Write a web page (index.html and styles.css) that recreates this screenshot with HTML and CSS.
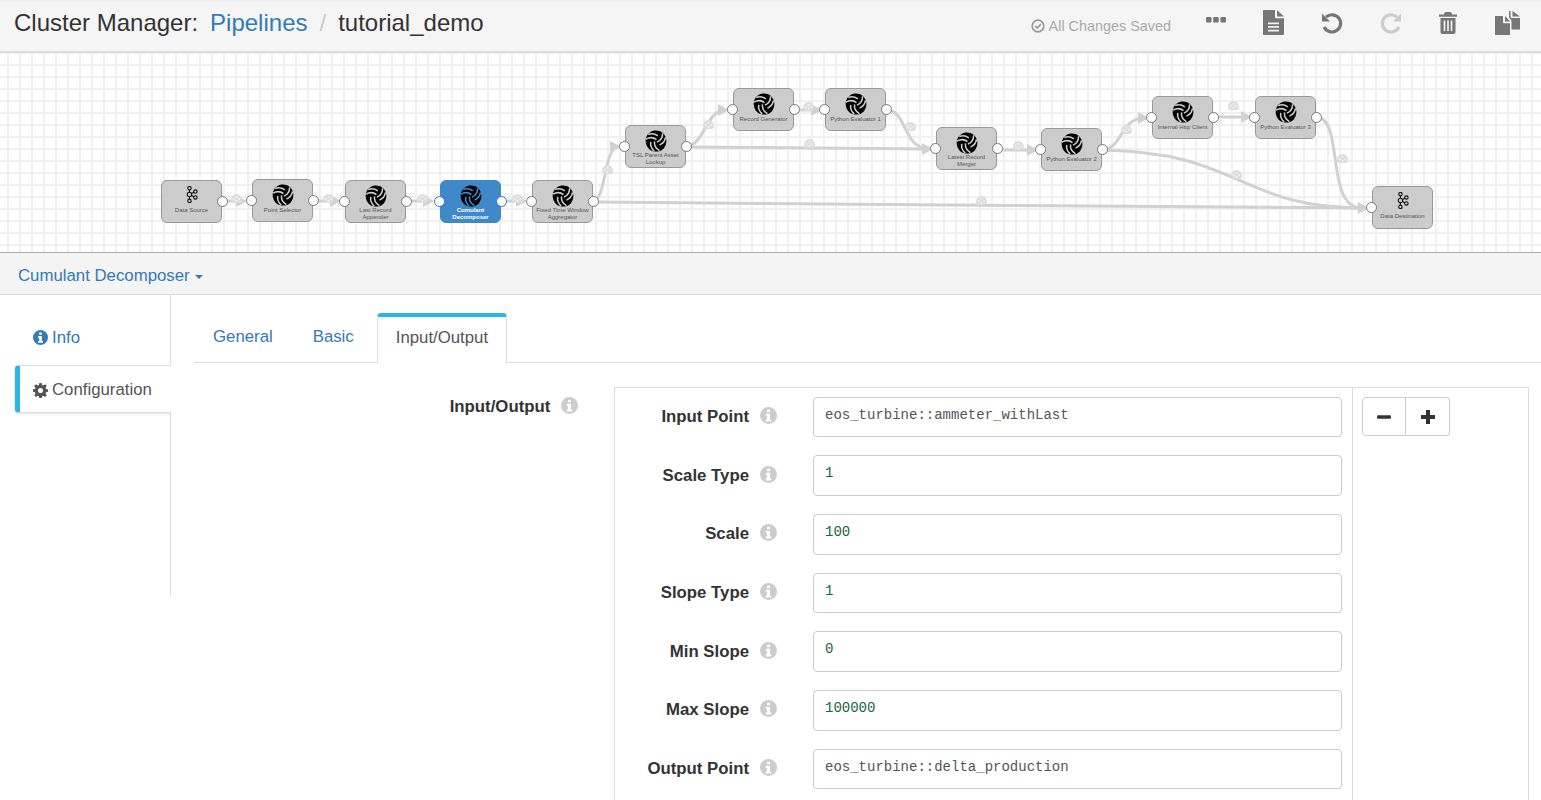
FILE: index.html
```html
<!DOCTYPE html>
<html lang="en">
<head>
    <meta charset="UTF-8">
    <title>tutorial_demo</title>
    <link rel="stylesheet" href="styles.css">
</head>
<body>

<svg class="defs" width="0" height="0">
    <symbol id="swirl" viewBox="0 0 24 24">
        <path fill="#000" d="M12 .6C17 .6 21.200 3.600 22.800 8.500 24.300 13.500 22.500 18.800 18.500 21.800 14.500 24.200 8.500 24 5 21.200 1.300 18 -.2 13 1.300 8.300 3 3.500 7 .6 12 .6z"/>
        <g id="swirl-arm" fill="none" stroke="currentColor" stroke-width="1.700">
            <path d="M12.500 10.500C9.500 8 5.500 7.500 1 10"/>
            <path d="M14 6.500C10.500 3.800 7 3.500 3.500 5"/>
        </g>
        <use href="#swirl-arm" transform="rotate(120 12 12)"/>
        <use href="#swirl-arm" transform="rotate(240 12 12)"/>
    </symbol>
    <symbol id="hub" viewBox="0 0 14 20">
        <g fill="none" stroke="#111" stroke-width="1.300">
            <circle cx="4" cy="2.500" r="2"/>
            <circle cx="4" cy="10" r="2.600"/>
            <circle cx="4" cy="17.500" r="2"/>
            <circle cx="11" cy="6.500" r="2"/>
            <circle cx="11" cy="13.500" r="2"/>
            <path d="M4 4.500v3M4 12.600v3M6.300 8.800l2.900-1.500M6.300 11.200l2.900 1.500"/>
        </g>
    </symbol>
    <symbol id="gauge" viewBox="0 0 12 10">
        <path fill="#ddd" d="M6 0a6 6 0 0 0-6 6c0 1.500.5 3 1.500 4h9c1-1 1.500-2.500 1.500-4a6 6 0 0 0-6-6z"/>
        <g fill="#f4f4f4">
            <circle cx="3" cy="5.500" r="1"/>
            <circle cx="6" cy="3" r="1"/>
            <circle cx="9" cy="5.500" r="1"/>
            <circle cx="6" cy="7.500" r="1.200"/>
        </g>
    </symbol>
    <symbol id="info" viewBox="0 0 16 16">
        <path fill-rule="evenodd" d="M8 0a8 8 0 1 0 0 16A8 8 0 0 0 8 0zM6.600 2.600h2.800v2.400H6.600zM5.400 6.400h4v5.400h1.200v1.800H5.400v-1.800h1.200V8.200H5.400z"/>
    </symbol>
</svg>

<div class="topbar">
    <h1 class="crumbs">
        <span>Cluster Manager:</span>
        <a class="crumb-link">Pipelines</a>
        <span class="crumb-sep">/</span>
        <span>tutorial_demo</span>
    </h1>
    <div class="tools">
        <span class="saved">
            <svg class="saved-icon" viewBox="0 0 14 14"><circle cx="7" cy="7" r="5.800" fill="none" stroke="#999" stroke-width="1.700"/><path d="M4.200 7l2 2 3.600-3.800" fill="none" stroke="#999" stroke-width="1.700"/></svg>
            All Changes Saved
        </span>
        <svg class="tool tool-more" viewBox="0 0 20 6"><rect x="0" y="0" width="5.500" height="5.500" rx="1.200"/><rect x="7.200" y="0" width="5.500" height="5.500" rx="1.200"/><rect x="14.500" y="0" width="5.500" height="5.500" rx="1.200"/></svg>
        <svg class="tool tool-file" viewBox="0 0 21 25"><path fill-rule="evenodd" d="M1 0h11v7c0 .8.500 1.300 1.300 1.300H21V24c0 .6-.4 1-1 1H1c-.6 0-1-.4-1-1V1c0-.6.400-1 1-1zm4 12.500v1.700h11v-1.700zm0 3.600v1.700h11v-1.700zm0 3.600v1.700h11v-1.700z"/><path d="M14 0l7 6.500h-7z"/></svg>
        <svg class="tool tool-undo" viewBox="0 0 22 22"><path fill="none" stroke="currentColor" stroke-width="3.200" d="M5 5.200A8.600 8.600 0 1 1 3.200 15"/><path fill="currentColor" d="M1 1.500v8h8z"/></svg>
        <svg class="tool tool-redo" viewBox="0 0 22 22"><path fill="none" stroke="currentColor" stroke-width="3.200" d="M17 5.200A8.600 8.600 0 1 0 18.800 15"/><path fill="currentColor" d="M21 1.500v8h-8z"/></svg>
        <svg class="tool tool-trash" viewBox="0 0 18 22"><path fill-rule="evenodd" d="M6 0h6l1.200 2.500H18v2.300H0V2.500h4.800zM1.500 6h15v14c0 1.200-.8 2-2 2h-11c-1.200 0-2-.8-2-2zm3.200 2.500v10.500h1.600V8.500zm3.500 0v10.500h1.600V8.500zm3.500 0v10.500h1.600V8.500z"/></svg>
        <svg class="tool tool-copy" viewBox="0 0 25 24"><path fill-rule="evenodd" d="M0 5h8v6c0 .8.500 1.300 1.300 1.300H15V24H0z"/><path d="M10 5l5 5.500h-5z"/><path d="M14 0h1.500v5.800c0 .7.500 1.200 1.200 1.200H25v11.500h-8.500v-9L14 6.500z"/><path d="M17.500 0L25 5.500h-7.500z"/></svg>
    </div>
</div>

<div class="canvas">
    <svg class="edges" viewBox="0 0 1541 199">
        <g fill="none" stroke="#d1d1d1" stroke-width="3">
            <path d="M222 148H240"/>
            <path d="M313 148H333"/>
            <path d="M406 148H428"/>
            <path d="M501 148H520"/>
            <path d="M593 148C606 148 604 94 618 94"/>
            <path d="M593 149C800 150 1200 155 1362 155"/>
            <path d="M686 93C705 93 705 57 726 57"/>
            <path d="M686 94C760 94 860 96 925 96"/>
            <path d="M794 57H816"/>
            <path d="M886 57C908 57 902 96 930 96"/>
            <path d="M997 97C1010 97 1020 97 1033 97"/>
            <path d="M1102 97C1122 97 1120 65 1144 65"/>
            <path d="M1102 97C1240 99 1240 155 1362 155"/>
            <path d="M1213 64H1246"/>
            <path d="M1316 64C1345 64 1324 155 1362 155"/>
        </g>
        <g fill="#d1d1d1">
            <path d="M236 142l11 6-11 6z"/>
            <path d="M330 142l11 6-11 6z"/>
            <path d="M423 142l11 6-11 6z"/>
            <path d="M516 142l11 6-11 6z"/>
            <path d="M610 88l11 5.500-11 5.500z"/>
            <path d="M718 51l11 6-11 6z"/>
            <path d="M811 51l11 6-11 6z"/>
            <path d="M922 90l11 6-11 6z"/>
            <path d="M1027 91l11 6-11 6z"/>
            <path d="M1138 59l11 6-11 6z"/>
            <path d="M1241 58l11 6-11 6z"/>
            <path d="M1358 149l11 6-11 6z"/>
        </g>
        <use href="#gauge" x="231" y="141" width="11" height="9"/>
        <use href="#gauge" x="323" y="141" width="11" height="9"/>
        <use href="#gauge" x="417" y="141" width="11" height="9"/>
        <use href="#gauge" x="512" y="141" width="11" height="9"/>
        <use href="#gauge" x="602" y="112" width="11" height="9"/>
        <use href="#gauge" x="703" y="67" width="11" height="9"/>
        <use href="#gauge" x="804" y="86" width="11" height="9"/>
        <use href="#gauge" x="803" y="49" width="11" height="9"/>
        <use href="#gauge" x="905" y="69" width="11" height="9"/>
        <use href="#gauge" x="976" y="143" width="11" height="9"/>
        <use href="#gauge" x="1013" y="88" width="11" height="9"/>
        <use href="#gauge" x="1121" y="72" width="11" height="9"/>
        <use href="#gauge" x="1228" y="48" width="11" height="9"/>
        <use href="#gauge" x="1231" y="117" width="11" height="9"/>
        <use href="#gauge" x="1337" y="101" width="11" height="9"/>
    </svg>

    <div class="node" style="left:161px;top:127px"><svg class="node-hub"><use href="#hub"/></svg><span class="node-name">Data Source</span><i class="port port-out"></i></div>
    <div class="node" style="left:252px;top:126px"><svg class="node-logo"><use href="#swirl"/></svg><span class="node-name">Point Selector</span><i class="port port-in"></i><i class="port port-out"></i></div>
    <div class="node" style="left:345px;top:127px"><svg class="node-logo"><use href="#swirl"/></svg><span class="node-name">Last Record Appender</span><i class="port port-in"></i><i class="port port-out"></i></div>
    <div class="node node-active" style="left:440px;top:127px"><svg class="node-logo"><use href="#swirl"/></svg><span class="node-name">Cumulant Decomposer</span><i class="port port-in"></i><i class="port port-out"></i></div>
    <div class="node" style="left:532px;top:127px"><svg class="node-logo"><use href="#swirl"/></svg><span class="node-name">Fixed Time Window Aggregator</span><i class="port port-in"></i><i class="port port-out"></i></div>
    <div class="node" style="left:625px;top:72px"><svg class="node-logo"><use href="#swirl"/></svg><span class="node-name">TSL Parent Asset Lookup</span><i class="port port-in"></i><i class="port port-out"></i></div>
    <div class="node" style="left:733px;top:35px"><svg class="node-logo"><use href="#swirl"/></svg><span class="node-name">Record Generator</span><i class="port port-in"></i><i class="port port-out"></i></div>
    <div class="node" style="left:825px;top:35px"><svg class="node-logo"><use href="#swirl"/></svg><span class="node-name">Python Evaluator 1</span><i class="port port-in"></i><i class="port port-out"></i></div>
    <div class="node" style="left:936px;top:74px"><svg class="node-logo"><use href="#swirl"/></svg><span class="node-name">Latest Record Merger</span><i class="port port-in"></i><i class="port port-out"></i></div>
    <div class="node" style="left:1041px;top:75px"><svg class="node-logo"><use href="#swirl"/></svg><span class="node-name">Python Evaluator 2</span><i class="port port-in"></i><i class="port port-out"></i></div>
    <div class="node" style="left:1152px;top:43px"><svg class="node-logo"><use href="#swirl"/></svg><span class="node-name">Internal Http Client</span><i class="port port-in"></i><i class="port port-out"></i></div>
    <div class="node" style="left:1255px;top:43px"><svg class="node-logo"><use href="#swirl"/></svg><span class="node-name">Python Evaluator 3</span><i class="port port-in"></i><i class="port port-out"></i></div>
    <div class="node" style="left:1372px;top:133px"><svg class="node-hub"><use href="#hub"/></svg><span class="node-name">Data Destination</span><i class="port port-in"></i></div>
</div>

<div class="stage-bar">
    <a class="stage-name">Cumulant Decomposer <i class="caret"></i></a>
</div>

<div class="detail">
    <div class="side">
        <a class="side-item">
            <svg class="side-icon"><use href="#info"/></svg>
            Info
        </a>
        <a class="side-item side-active">
            <svg class="side-icon" viewBox="0 0 16 16"><path fill-rule="evenodd" d="M6.700 0h2.600l.4 2.200 1.300.5L12.900 1.400l1.800 1.800-1.300 1.900.5 1.300 2.100.4v2.600l-2.100.4-.5 1.300 1.300 1.900-1.800 1.800-1.900-1.300-1.300.5-.4 2.100H6.700l-.4-2.100-1.300-.5-1.900 1.300-1.800-1.800 1.300-1.900-.5-1.300L0 9.300V6.700l2.100-.4.5-1.300L1.300 3.100l1.800-1.800L5 2.700l1.300-.5zM8 5.300a2.700 2.700 0 1 0 0 5.400 2.700 2.700 0 0 0 0-5.400z"/></svg>
            Configuration
        </a>
    </div>

    <div class="main">
        <div class="tabs">
            <a class="tab">General</a>
            <a class="tab">Basic</a>
            <a class="tab tab-active">Input/Output</a>
        </div>

        <div class="config">
            <div class="config-label">
                Input/Output
                <svg class="help"><use href="#info"/></svg>
            </div>
            <div class="config-box">
                <div class="fields">
                    <div class="field">
                        <label class="field-label">Input Point <svg class="help"><use href="#info"/></svg></label>
                        <div class="field-input">eos_turbine::ammeter_withLast</div>
                    </div>
                    <div class="field">
                        <label class="field-label">Scale Type <svg class="help"><use href="#info"/></svg></label>
                        <div class="field-input num">1</div>
                    </div>
                    <div class="field">
                        <label class="field-label">Scale <svg class="help"><use href="#info"/></svg></label>
                        <div class="field-input num">100</div>
                    </div>
                    <div class="field">
                        <label class="field-label">Slope Type <svg class="help"><use href="#info"/></svg></label>
                        <div class="field-input num">1</div>
                    </div>
                    <div class="field">
                        <label class="field-label">Min Slope <svg class="help"><use href="#info"/></svg></label>
                        <div class="field-input num">0</div>
                    </div>
                    <div class="field">
                        <label class="field-label">Max Slope <svg class="help"><use href="#info"/></svg></label>
                        <div class="field-input num">100000</div>
                    </div>
                    <div class="field">
                        <label class="field-label">Output Point <svg class="help"><use href="#info"/></svg></label>
                        <div class="field-input">eos_turbine::delta_production</div>
                    </div>
                </div>
                <div class="actions">
                    <div class="btns">
                        <button class="btn"><svg viewBox="0 0 14 14"><rect x="0" y="5.200" width="14" height="3.600" rx="1"/></svg></button>
                        <button class="btn"><svg viewBox="0 0 14 14"><path d="M5 0h4v5h5v4H9v5H5V9H0V5h5z"/></svg></button>
                    </div>
                </div>
            </div>
        </div>
    </div>
</div>

</body>
</html>
```

FILE: styles.css
```css
*{
    margin: 0;
    padding: 0;
    box-sizing: border-box;
}
html, body{
    height: 800px;
    overflow: hidden;
}
body{
    font-family: "Liberation Sans", Arial, sans-serif;
    font-size: 14px;
    color: #333;
    background: #fff;
}
.defs{
    position: absolute;
}

/* top bar */
.topbar{
    height: 53px;
    background: #f5f5f5;
    border-top: 2px solid #eee;
    border-bottom: 2px solid #ddd;
    display: flex;
    justify-content: space-between;
    align-items: center;
    padding: 0 0 8px 14px;
}
.crumbs{
    font-size: 24px;
    font-weight: normal;
    display: flex;
    color: #333;
}
.crumb-link{
    color: #337ab7;
    margin-left: 12px;
}
.crumb-sep{
    color: #ccc;
    margin: 0 12px;
}
.tools{
    display: flex;
    align-items: center;
    padding-right: 21px;
}
.tool{
    display: block;
    fill: #777;
    color: #777;
}
.saved{
    color: #aaa;
    font-size: 14.400px;
    display: flex;
    align-items: center;
    gap: 4px;
    margin-top: 7px;
}
.saved-icon{
    width: 14px;
    height: 14px;
}
.tool-more{
    width: 20px;
    height: 6px;
    margin: 0 0 6px 35px;
}
.tool-file{
    width: 21px;
    height: 25px;
    margin-left: 37px;
}
.tool-undo{
    width: 22px;
    height: 22px;
    margin-left: 37px;
}
.tool-redo{
    width: 22px;
    height: 22px;
    margin-left: 37px;
    color: #ccc;
}
.tool-trash{
    width: 18px;
    height: 22px;
    margin-left: 37px;
}
.tool-copy{
    width: 25px;
    height: 24px;
    margin-left: 38px;
}

/* pipeline canvas */
.canvas{
    position: relative;
    height: 200px;
    border-bottom: 1px solid #aaa;
    background-color: #fff;
    background-image:
        linear-gradient(to right, #f0f0f0 2px, transparent 2px),
        linear-gradient(to bottom, #f0f0f0 2px, transparent 2px);
    background-size: 12px 12px;
    background-position: 7px -1px;
    overflow: hidden;
}
.edges{
    position: absolute;
    left: 0;
    top: 0;
    width: 1541px;
    height: 199px;
}
.node{
    position: absolute;
    width: 61px;
    height: 43px;
    background: #ccc;
    color: #ccc;
    border: 1px solid #999;
    border-radius: 6px;
    text-align: center;
    padding-top: 4px;
}
.node-logo{
    display: block;
    width: 22px;
    height: 22px;
    margin: 0 auto;
}
.node-hub{
    display: block;
    width: 12px;
    height: 17px;
    margin: 1px auto 3px;
}
.node-name{
    display: flex;
    align-items: flex-end;
    justify-content: center;
    min-height: 8px;
    font-size: 6px;
    line-height: 7px;
    color: #555;
    padding: 0 1px;
}
.node-active{
    background: #3f88c9;
    border-color: #3f88c9;
    color: #3f88c9;
}
.node-active .node-name{
    color: #fff;
    font-weight: bold;
}
.port{
    position: absolute;
    top: 15px;
    width: 11px;
    height: 11px;
    border-radius: 50%;
    background: #fff;
    border: 1px solid #777;
}
.node-active .port{
    border-color: #337ab7;
}
.port-in{
    left: -7px;
}
.port-out{
    right: -7px;
}

/* stage name bar */
.stage-bar{
    height: 42px;
    background: #f4f4f4;
    border-bottom: 1px solid #ddd;
    padding: 13px 0 0 18px;
    font-size: 16.800px;
}
.stage-name{
    color: #337ab7;
}
.caret{
    display: inline-block;
    width: 0;
    height: 0;
    border-top: 4px solid #337ab7;
    border-left: 4px solid transparent;
    border-right: 4px solid transparent;
    vertical-align: middle;
    margin-left: 1px;
}

/* detail */
.detail{
    display: flex;
    align-items: flex-start;
}
.side{
    width: 171px;
    height: 301px;
    border-right: 1px solid #ddd;
    padding-left: 15px;
    font-size: 16.800px;
}
.side-item{
    display: flex;
    align-items: center;
    gap: 4px;
    height: 70px;
    padding: 15px 0 0 18px;
    color: #337ab7;
    fill: #337ab7;
}
.side-icon{
    width: 15px;
    height: 15px;
}
.side-active{
    height: 48px;
    width: 156px;
    padding-top: 2px;
    color: #555;
    fill: #555;
    background: #fff;
    border-left: 5px solid #2cb5e8;
    border-top: 1px solid #ddd;
    border-bottom: 1px solid #ddd;
    border-radius: 4px 0 0 4px;
    padding-left: 13px;
    box-shadow: -1px 1px 2px rgba(0,0,0,.1);
    position: relative;
}
.main{
    flex: 1;
    padding: 18px 0 0 23px;
}
.tabs{
    display: flex;
    height: 50px;
    border-bottom: 1px solid #ddd;
    font-size: 16.800px;
}
.tab{
    color: #337ab7;
    padding: 14px 20px 0 19px;
    margin-right: 1px;
}
.tab-active{
    color: #555;
    background: #fff;
    height: 50px;
    margin-left: 2px;
    border: 1px solid #ddd;
    border-top: 4px solid #2cb5e8;
    border-bottom: 0;
    border-radius: 4px 4px 0 0;
    padding: 11px 18px 0;
}
.config{
    display: flex;
    margin: 24px 12px 0 0;
}
.config-label{
    width: 420px;
    padding: 10px 36px 0 0;
    text-align: right;
    font-size: 16.800px;
    font-weight: bold;
    flex: none;
}
.help{
    width: 17px;
    height: 17px;
    fill: #ccc;
    vertical-align: -2px;
    margin-left: 6px;
}
.config-box{
    flex: 1;
    display: flex;
    border: 1px solid #ddd;
    height: 430px;
}
.fields{
    width: 738px;
    padding: 8.700px 10px 0 0;
    border-right: 1px solid #ddd;
}
.field{
    display: flex;
    align-items: center;
    height: 40.670px;
    margin-bottom: 18px;
}
.field-label{
    width: 198px;
    padding: 0 64px 0 0;
    text-align: right;
    font-size: 16.800px;
    font-weight: bold;
    flex: none;
    position: relative;
}
.field-label .help{
    position: absolute;
    right: 36px;
    top: 0;
}
.field-input{
    flex: 1;
    height: 40.670px;
    border: 1px solid #ccc;
    border-radius: 4px;
    padding: 9px 11px;
    font-family: "Liberation Mono", monospace;
    font-size: 14px;
    color: #555;
}
.num{
    color: #116644;
}
.actions{
    padding: 9px;
}
.btns{
    display: flex;
}
.btn{
    width: 44px;
    height: 39px;
    background: #fff;
    border: 1px solid #ccc;
    display: flex;
    align-items: center;
    justify-content: center;
    fill: #333;
}
.btn svg{
    width: 14px;
    height: 14px;
}
.btn:first-child{
    border-radius: 4px 0 0 4px;
}
.btn:last-child{
    border-left: 0;
    border-radius: 0 4px 4px 0;
}
```
